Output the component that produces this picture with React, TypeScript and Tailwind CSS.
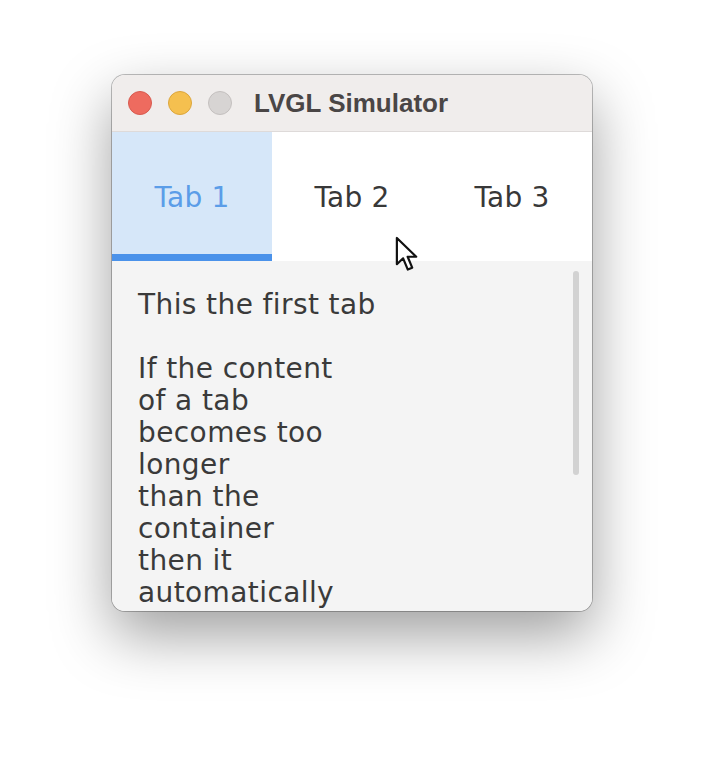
import { useState } from 'react'

const tabs = ['Tab 1', 'Tab 2', 'Tab 3']

const lines = [
  'This the first tab',
  '',
  'If the content',
  'of a tab',
  'becomes too',
  'longer',
  'than the',
  'container',
  'then it',
  'automatically',
]

function Cursor() {
  return (
    <svg
      width="25"
      height="37"
      viewBox="0 0 16 23.5"
      className="absolute left-[283px] top-[161px] pointer-events-none"
    >
      <path
        d="M1.2 1.2 L1.2 18 L5.2 14.2 L8.2 21.4 L11 20.2 L8.1 13.2 L13.6 13.2 Z"
        fill="#fff"
        stroke="#111"
        strokeWidth="1.4"
        strokeLinejoin="round"
      />
    </svg>
  )
}

export default function App() {
  const [active, setActive] = useState(0)

  return (
    <div className="w-[704px] h-[760px] bg-white pt-[75px] pl-[112px]">
      <div className="relative w-[480px] h-[536px] rounded-[13px] overflow-hidden flex flex-col ring-1 ring-black/25 shadow-[0_24px_60px_rgba(0,0,0,0.38)]">
        {/* title bar */}
        <div className="h-[57px] shrink-0 bg-[#f0edec] border-b border-[#dedad9] flex items-center pl-4">
          <div className="flex gap-4">
            <span className="w-6 h-6 rounded-full bg-[#ee6b5f] border border-[#d85a4f]" />
            <span className="w-6 h-6 rounded-full bg-[#f5c04f] border border-[#dca63c]" />
            <span className="w-6 h-6 rounded-full bg-[#d7d4d3] border border-[#c4c0bf]" />
          </div>
          <span className="ml-[22px] text-[26px] font-bold text-[#4a4646] font-['Liberation_Sans',sans-serif]">
            LVGL Simulator
          </span>
        </div>

        {/* tabs */}
        <div className="h-[129px] shrink-0 grid grid-cols-3 bg-white font-['DejaVu_Sans',sans-serif] text-[28px] tracking-[0.2px]">
          {tabs.map((t, i) => (
            <button
              key={t}
              onClick={() => setActive(i)}
              className={
                i === active
                  ? 'relative flex items-center justify-center pt-[3px] bg-[#d6e7f9] text-[#5b9de8]'
                  : 'relative flex items-center justify-center pt-[3px] text-[#383838]'
              }
            >
              {t}
              {i === active && (
                <span className="absolute left-0 right-0 bottom-0 h-[7px] bg-[#4a92ea]" />
              )}
            </button>
          ))}
        </div>

        {/* content */}
        <div className="relative flex-1 overflow-hidden bg-[#f4f4f4]">
          <div className="pt-[28px] pl-[26px] text-[28px] leading-[32px] tracking-[0.4px] text-[#3a3a3a] font-['DejaVu_Sans',sans-serif]">
            {lines.map((l, i) => (
              <div key={i} className="h-8 whitespace-pre">
                {l}
              </div>
            ))}
          </div>
          <div className="absolute right-[13px] top-[10px] w-[6px] h-[204px] rounded-full bg-[#d2d2d2]" />
        </div>

        <Cursor />
      </div>
    </div>
  )
}
